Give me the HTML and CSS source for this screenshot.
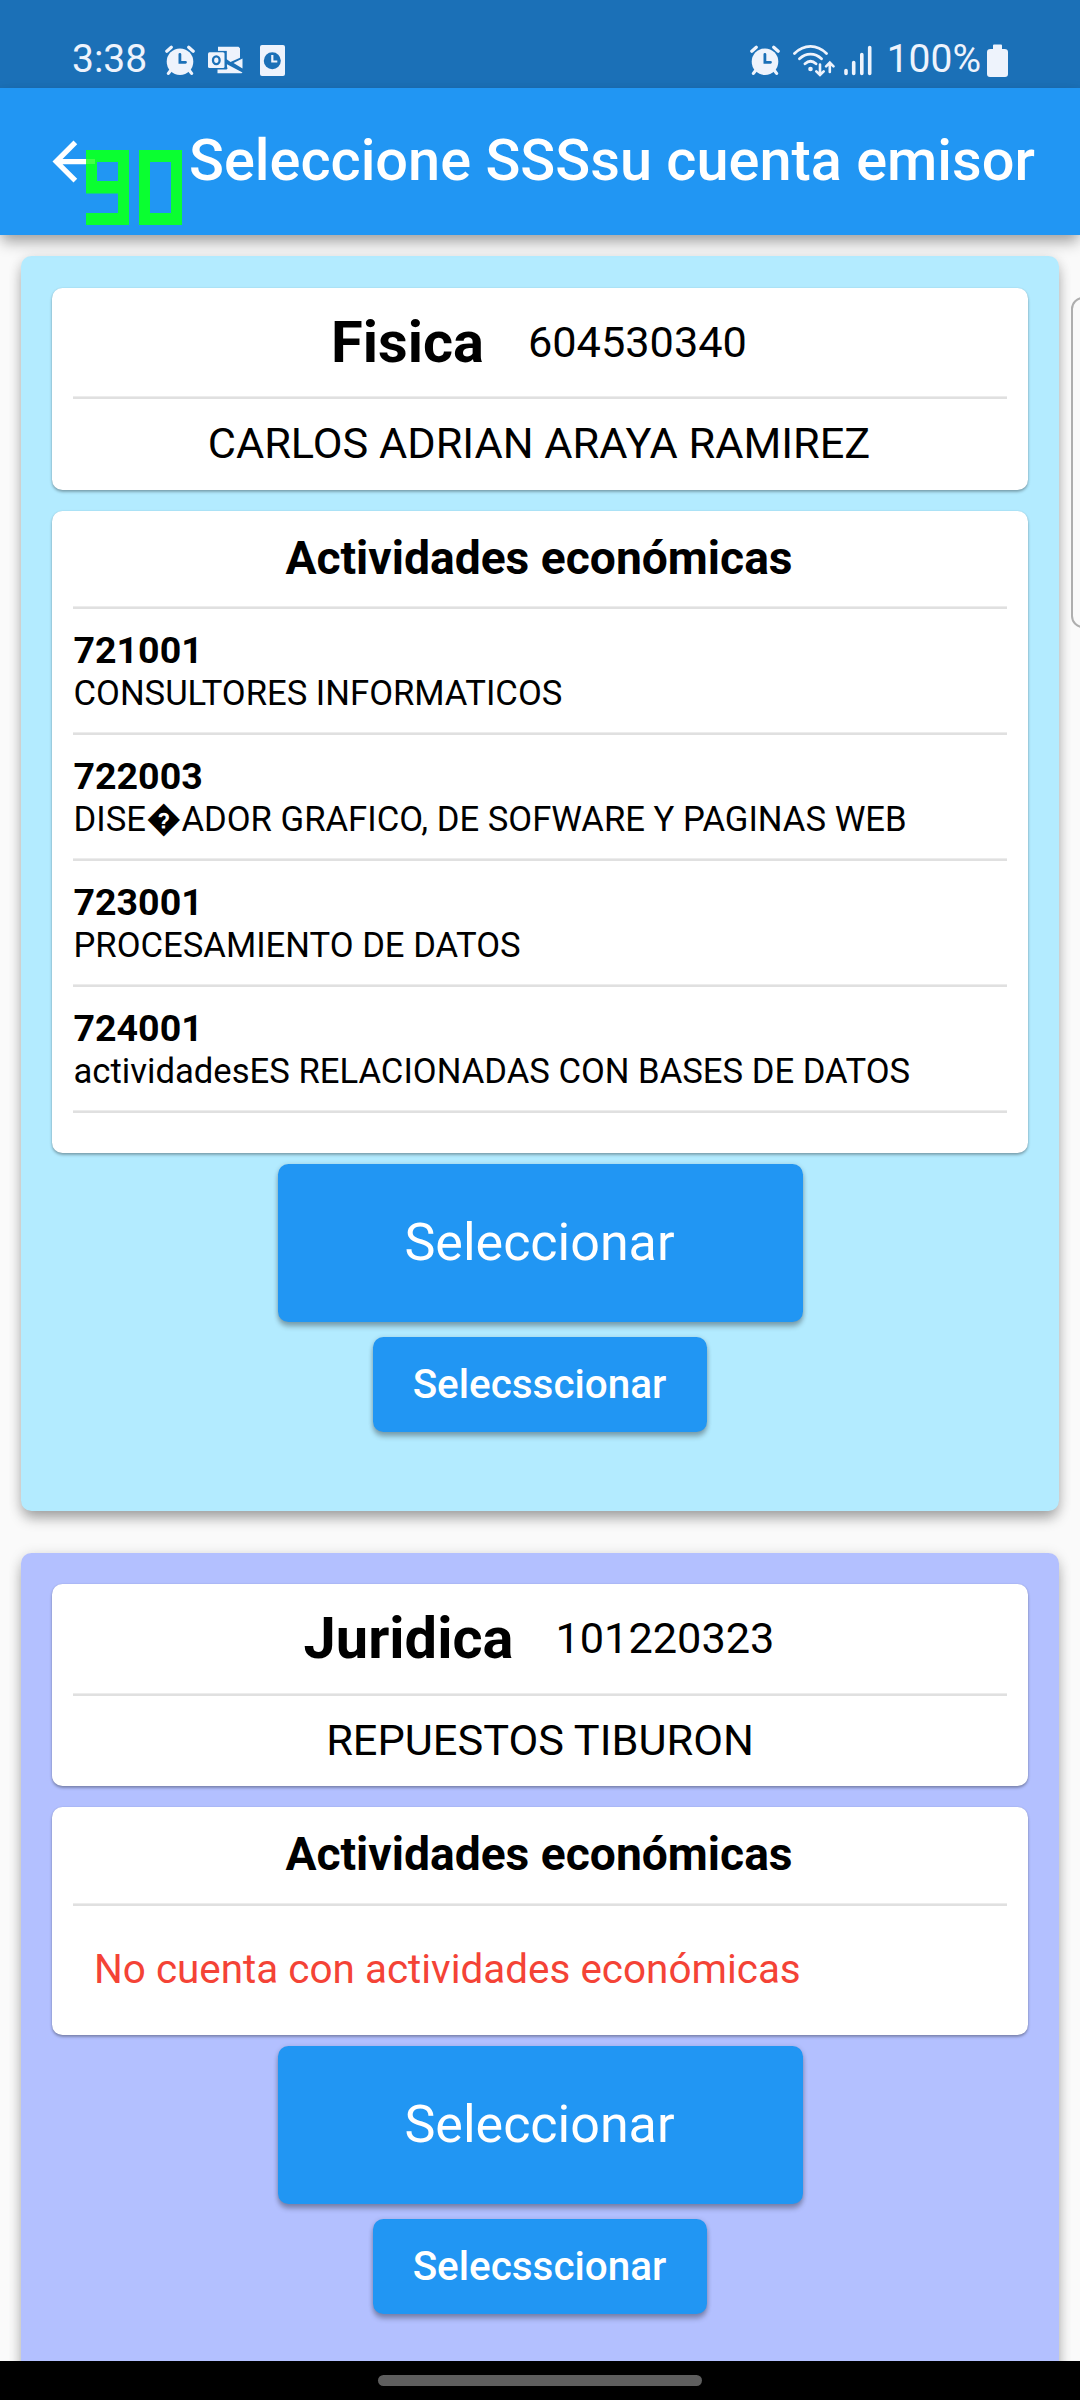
FILE: index.html
```html
<!DOCTYPE html>
<html lang="es">
<head>
<meta charset="utf-8">
<title>Seleccione su cuenta emisor</title>
<link rel="stylesheet" href="styles.css">
</head>
<body>
<div class="screen">
  <header class="status">
    <div class="status-group">
      <span class="status-text">3:38</span>
      <svg class="ic-alarm" width="30" height="34" viewBox="0 0 30 34">
        <circle cx="15" cy="17.7" r="13.3" fill="currentColor"/>
        <path d="M1.8 7.2L6.3 3.3M28.2 7.2L23.7 3.3M6 26l-2.6 3.4M24 26l2.6 3.4" fill="none" stroke="currentColor" stroke-width="3.2" stroke-linecap="round"/>
        <path d="M14.9 10.3v8h5.6" class="cut" stroke-width="2.8" stroke-linecap="round"/>
      </svg>
      <svg class="ic-mail" width="35" height="34" viewBox="0 0 35 34">
        <path d="M10 2.8h20.5l1.500 1.400v9.600L22.500 18 10 9zM34.500 14.500v10L25.500 19zM9.500 29.300V25h10l-1-5 16 8.500-1 .8z" fill="currentColor"/>
        <rect x="-.8" y="6.900" width="19.600" height="18.600" class="patch"/>
        <path d="M17 17l17 9.500" class="cut" stroke-width="2"/>
        <rect x="0" y="8.300" width="16.500" height="15.800" rx="1.500" fill="currentColor"/>
        <ellipse cx="8.300" cy="16.200" rx="3.300" ry="3.900" class="cut" stroke-width="2.300"/>
      </svg>
      <svg class="ic-doc" width="25" height="34" viewBox="0 0 25 34">
        <rect y="1" width="25" height="31" rx="2" fill="currentColor"/>
        <circle cx="12.300" cy="16.700" r="8.500" class="patch"/>
        <path d="M12.300 11v6.500h5" fill="none" stroke="currentColor" stroke-width="2.200"/>
      </svg>
    </div>
    <div class="status-group">
      <svg class="ic-alarm-r" width="30" height="34" viewBox="0 0 30 34">
        <circle cx="15" cy="17.7" r="13.3" fill="currentColor"/>
        <path d="M1.8 7.2L6.3 3.3M28.2 7.2L23.7 3.3M6 26l-2.6 3.4M24 26l2.6 3.4" fill="none" stroke="currentColor" stroke-width="3.2" stroke-linecap="round"/>
        <path d="M14.9 10.3v8h5.6" class="cut" stroke-width="2.8" stroke-linecap="round"/>
      </svg>
      <svg class="ic-wifi" width="42" height="34" viewBox="0 0 42 34">
        <g fill="none" stroke="currentColor" stroke-width="2.800" stroke-linecap="round">
          <path d="M1.500 9.500C11 0 24 0 33.500 9.500M6.500 14.700C13 8.500 22 8.500 28.500 14.700M12 19.700c3.500-3.200 7.500-3.200 11 0"/>
        </g>
        <circle cx="17.500" cy="25" r="2.300" fill="currentColor"/>
        <path d="M27 20.500v10M23.300 27.300l3.700 3.700 3.700-3.700M36.800 28V19M33.100 22.300l3.700-3.700 3.700 3.700" fill="none" stroke="currentColor" stroke-width="2.600" stroke-linecap="round"/>
      </svg>
      <svg class="ic-signal" width="28" height="34" viewBox="0 0 28 34">
        <path d="M2 26.500v3M9.700 18.500v11M17.800 10.500v19M25.700 3.500v26" stroke="currentColor" stroke-width="3.600" stroke-linecap="round"/>
      </svg>
      <span class="status-text">100%</span>
      <svg class="ic-battery" width="21" height="34" viewBox="0 0 21 34">
        <path d="M6 5V1.500Q6 .5 7 .5h7q1 0 1 1V5h2.500Q21 5 21 8v22q0 3-3 3H3q-3 0-3-3V8q0-3 3.500-3z" fill="currentColor"/>
      </svg>
    </div>
  </header>

  <div class="appbar">
    <svg class="back" width="63" height="63" viewBox="0 0 24 24"><path d="M20 11H7.830l5.590-5.590L12 4l-8 8 8 8 1.410-1.410L7.830 13H20v-2z" fill="#fff"/></svg>
    <h1 class="title">Seleccione SSSsu cuenta emisor</h1>
    <!-- seven-segment frame counter -->
    <svg class="fps" width="96" height="75" viewBox="0 0 96 75">
      <g fill="#0aff30">
        <rect width="43" height="12"/><rect y="12" width="11" height="19"/><rect x="32" y="12" width="11" height="51"/><rect y="31" width="32" height="12.500"/><rect y="63" width="43" height="12"/>
        <rect x="53" width="43" height="12"/><rect x="53" y="12" width="11" height="51"/><rect x="85" y="12" width="11" height="51"/><rect x="53" y="63" width="43" height="12"/>
      </g>
      <rect y="9" width="9" height="5" fill="#45ff45"/>
    </svg>
  </div>

  <main class="list">
    <section class="account account-cyan">
      <div class="panel">
        <div class="ident"><strong class="kind">Fisica</strong><span class="number">604530340</span></div>
        <div class="rule"></div>
        <div class="holder">CARLOS ADRIAN ARAYA RAMIREZ</div>
      </div>
      <div class="panel">
        <h2 class="heading">Actividades económicas</h2>
        <div class="rule"></div>
        <div class="activity"><b class="code">721001</b><span class="desc">CONSULTORES INFORMATICOS</span></div>
        <div class="rule"></div>
        <div class="activity"><b class="code">722003</b><span class="desc">DISE&#xFFFD;ADOR GRAFICO, DE SOFWARE Y PAGINAS WEB</span></div>
        <div class="rule"></div>
        <div class="activity"><b class="code">723001</b><span class="desc">PROCESAMIENTO DE DATOS</span></div>
        <div class="rule"></div>
        <div class="activity"><b class="code">724001</b><span class="desc">actividadesES RELACIONADAS CON BASES DE DATOS</span></div>
        <div class="rule rule-last"></div>
      </div>
      <button class="btn btn-large">Seleccionar</button>
      <button class="btn btn-small">Selecsscionar</button>
    </section>

    <section class="account account-indigo">
      <div class="panel">
        <div class="ident"><strong class="kind">Juridica</strong><span class="number">101220323</span></div>
        <div class="rule"></div>
        <div class="holder">REPUESTOS TIBURON</div>
      </div>
      <div class="panel">
        <h2 class="heading">Actividades económicas</h2>
        <div class="rule"></div>
        <p class="empty">No cuenta con actividades económicas</p>
      </div>
      <button class="btn btn-large">Seleccionar</button>
      <button class="btn btn-small">Selecsscionar</button>
    </section>
  </main>

  <footer class="navbar"><span class="pill"></span></footer>
  <div class="edge-handle"></div>
</div>
</body>
</html>
```
FILE: styles.css
```css
* { box-sizing: border-box; }
body {
  margin: 0;
  background: #fafafa;
  font-family: Roboto, "DejaVu Sans", sans-serif;
  color: #000;
}
.screen {
  position: relative;
  display: flex;
  flex-direction: column;
  width: 1080px;
  height: 2400px;
  overflow: hidden;
}

/* status bar */
.status {
  flex: none;
  display: flex;
  justify-content: space-between;
  height: 88px;
  padding: 44px 72px 0;
  background: #1b70b7;
  color: #eef3fc;
}
.status-group { display: flex; align-items: flex-start; }
.status-text { font-size: 39px; line-height: 31px; white-space: nowrap; }
.cut { fill: none; stroke: #1b70b7; }
.patch { fill: #1b70b7; }
.ic-alarm { margin-left: 18px; }
.ic-mail { margin-left: 13px; }
.ic-doc { margin-left: 17px; }
.ic-wifi { margin-left: 13px; }
.ic-signal { margin: 0 15px 0 9px; }
.ic-battery { margin-left: 6px; }

/* app bar */
.appbar {
  position: relative;
  z-index: 1;
  flex: none;
  display: flex;
  align-items: center;
  height: 147px;
  padding-left: 42px;
  background: #2196f3;
  box-shadow: 0 9px 14px -2px rgba(0, 0, 0, .32), 0 2px 12px rgba(0, 0, 0, .08);
}
.back { margin-right: 84px; flex: none; }
.title {
  margin: 0 0 3px;
  font-size: 57.7px;
  font-weight: 500;
  line-height: 68px;
  color: #fff;
  white-space: nowrap;
}
.fps { position: absolute; left: 86px; top: 62px; }

/* accounts */
.list {
  flex: 1;
  min-height: 0;
  display: flex;
  flex-direction: column;
  gap: 42px;
  padding: 21px 21px 0;
  overflow: hidden;
}
.account {
  flex: none;
  display: flex;
  flex-direction: column;
  align-items: center;
  padding: 32px 31px 79px;
  border-radius: 10.5px;
  box-shadow: 0 9px 14px -2px rgba(0, 0, 0, .3), 0 2px 14px rgba(0, 0, 0, .14);
}
.account-cyan { background: #b3ebff; }
.account-indigo { background: #b3c0ff; padding-top: 31px; }

.panel {
  width: 976px;
  margin-bottom: 21px;
  padding: 0 21px;
  border-radius: 10.5px;
  background: #fff;
  box-shadow: 0 2px 3px rgba(0, 0, 0, .3), 0 0 2px rgba(0, 0, 0, .1);
}
.panel + .panel { margin-bottom: 11px; }
.rule { height: 3px; border-top: 1px solid #ececec; background: #e0e0e0; }
.rule-last { margin-bottom: 40px; }

.ident {
  display: flex;
  align-items: center;
  justify-content: center;
  gap: 44px;
  height: 108px;
  padding-right: 2px;
}
.account-indigo .ident { gap: 42px; height: 109px; }
.kind { font-size: 57.75px; line-height: 68px; margin-bottom: 1px; }
.number { font-size: 43.31px; line-height: 51px; }
.holder {
  height: 91px;
  padding-right: 2px;
  font-size: 43.31px;
  line-height: 89px;
  text-align: center;
}
.account-indigo .holder { padding-right: 0; }
.heading {
  margin: 0;
  height: 95px;
  padding-right: 2px;
  font-size: 46.2px;
  line-height: 94px;
  text-align: center;
}
.account-indigo .holder { height: 90px; }
.account-indigo .heading { height: 96px; }
.activity {
  display: flex;
  flex-direction: column;
  height: 123px;
  padding: 19px 0 0 .5px;
}
.code { font-size: 37.54px; line-height: 44px; }
.desc { font-size: 34.65px; line-height: 43px; white-space: nowrap; }
.empty {
  margin: 0;
  height: 129px;
  padding-left: 21px;
  font-size: 40.43px;
  line-height: 126px;
  color: #f44336;
}

.btn {
  border: 0;
  border-radius: 10.5px;
  padding: 0 1px 2px 0;
  font-family: inherit;
  color: #fff;
  background: #2196f3;
  box-shadow: 0 5px 5px rgba(0, 0, 0, .24), 0 1px 5px rgba(0, 0, 0, .18);
}
.btn-large { width: 525px; height: 158px; margin-bottom: 15px; font-size: 52px; }
.btn-small { width: 334px; height: 95px; font-size: 40.43px; font-weight: 500; }

/* gesture navigation */
.navbar {
  position: relative;
  z-index: 1;
  flex: none;
  display: flex;
  justify-content: center;
  height: 39px;
  padding-top: 14px;
  background: #000;
}
.pill { width: 324px; height: 11px; border-radius: 5.5px; background: #5e5e5e; }

.edge-handle {
  position: absolute;
  left: 1071px;
  top: 297px;
  width: 24px;
  height: 331px;
  border: 2px solid #aeaeae;
  border-radius: 12px;
  background: #fafafa;
}
```
